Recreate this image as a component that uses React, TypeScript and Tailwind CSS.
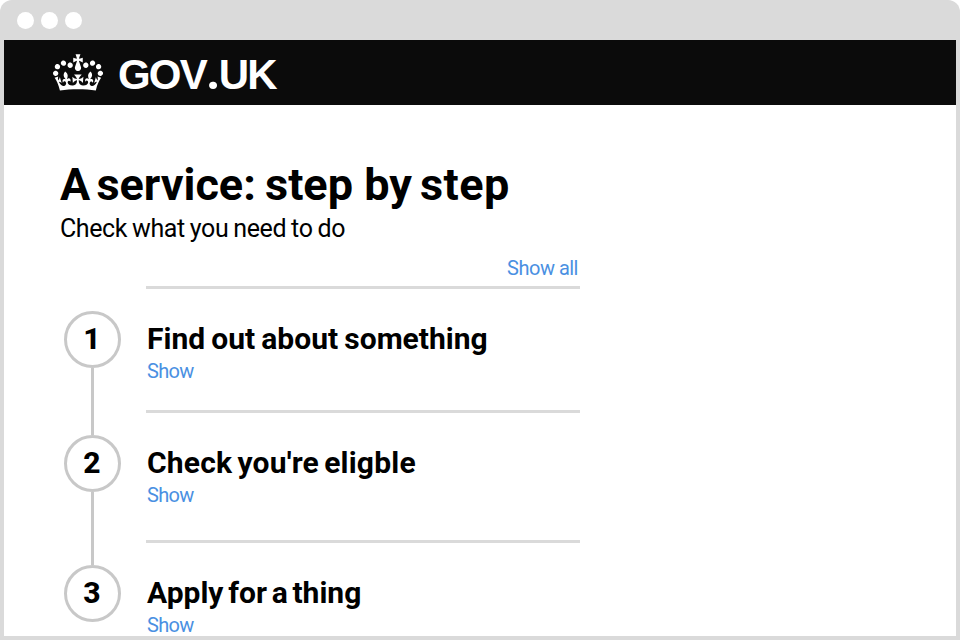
import React from "react";

type Step = { title: string; spacing: string; height: string; last?: boolean };

const steps: Step[] = [
  { title: "Find out about something", spacing: "[word-spacing:-1.3px]", height: "h-[124px]" },
  { title: "Check you're eligble", spacing: "[word-spacing:-2.5px] tracking-[0.2px]", height: "h-[130px]" },
  { title: "Apply for a thing", spacing: "[word-spacing:-2.7px]", height: "h-[93px]", last: true },
];

function Crown() {
  return (
    <svg className="h-[37px] w-[50px] shrink-0" viewBox="0 0 132 97" fill="#fff">
      <path d="M25 30.2c3.5 1.5 7.7-.2 9.1-3.7 1.5-3.6-.2-7.8-3.9-9.2-3.6-1.4-7.6.3-9.1 3.9-1.4 3.5.3 7.5 3.9 9zM9 39.5c3.6 1.5 7.8-.2 9.2-3.7 1.5-3.6-.2-7.8-3.9-9.1-3.6-1.5-7.6.2-9.1 3.8-1.4 3.5.3 7.5 3.8 9zM4.4 57.2c3.5 1.5 7.7-.2 9.1-3.8 1.5-3.6-.2-7.7-3.9-9.1-3.5-1.5-7.6.3-9.1 3.8-1.4 3.5.3 7.6 3.9 9.1zm38.3-21.4c3.5 1.5 7.7-.2 9.1-3.8 1.5-3.6-.2-7.7-3.9-9.1-3.6-1.5-7.6.3-9.1 3.8-1.3 3.6.4 7.7 3.9 9.1zm64.4-5.6c-3.6 1.5-7.8-.2-9.1-3.7-1.5-3.6.2-7.8 3.8-9.2 3.6-1.4 7.7.3 9.2 3.9 1.3 3.5-.4 7.5-3.9 9zm15.9 9.3c-3.6 1.5-7.7-.2-9.1-3.7-1.5-3.6.2-7.8 3.7-9.1 3.6-1.5 7.7.2 9.2 3.8 1.5 3.5-.3 7.5-3.8 9zm4.7 17.7c-3.6 1.5-7.8-.2-9.2-3.8-1.5-3.6.2-7.7 3.9-9.1 3.6-1.5 7.7.3 9.2 3.8 1.3 3.5-.4 7.6-3.9 9.1zM89.3 35.8c-3.6 1.5-7.8-.2-9.2-3.8-1.4-3.6.2-7.7 3.9-9.1 3.6-1.5 7.7.3 9.2 3.8 1.4 3.6-.3 7.7-3.9 9.1zM69.7 17.7l8.9 4.7V9.3l-8.9 2.8c-.2-.3-.5-.6-.9-.9L72.4 0H59.6l3.5 11.2c-.3.3-.6.5-.9.9l-8.8-2.8v13.1l8.8-4.7c.3.3.6.7.9.9l-5 15.4v.1c-.2.8-.4 1.6-.4 2.4 0 4.1 3.1 7.5 7 8.1h.2c.3 0 .7.1 1 .1.4 0 .7 0 1-.1h.2c4-.6 7.1-4.1 7.1-8.1 0-.8-.1-1.7-.4-2.4V34l-5.1-15.4c.4-.2.7-.6 1-.9zM66 92.8c16.9 0 32.800 1.100 47.100 3.200 4-16.900 8.900-26.700 14-33.500l-9.600-3.400c1 4.900 1.100 7.200 0 10.200-1.500-1.400-3-4.300-4.200-8.700L108.600 76c2.800-2 5-3.200 7.500-3.300-4.400 9.400-10 11.900-13.600 11.200-4.300-.8-6.300-4.600-5.600-7.900 1-4.700 5.700-5.900 8-.5 4.300-8.700-3-11.400-7.600-8.800 7.100-7.200 7.900-13.500 2.100-21.100-8 6.100-8.100 12.300-4.500 20.800-4.700-5.400-12.100-2.500-9.500 6.200 3.400-5.200 7.900-2 7.200 3.100-.6 4.300-6.400 7.800-13.500 7.200-10.300-.9-10.900-8-11.200-13.800 2.500-.5 7.100 1.800 11 7.300L80.200 60c-4.100 4.400-8 5.300-12.300 5.400 1.400-4.400 8-11.600 8-11.600H55.500s6.400 7.200 7.900 11.600c-4.200-.1-8-1-12.300-5.400l1.400 16.400c3.900-5.500 8.500-7.700 10.900-7.300-.3 5.800-.9 12.800-11.100 13.800-7.200.6-12.900-2.900-13.500-7.200-.7-5 3.800-8.300 7.100-3.100 2.700-8.700-4.600-11.600-9.400-6.200 3.700-8.500 3.600-14.700-4.600-20.800-5.800 7.600-5 13.900 2.200 21.100-4.700-2.600-11.900.1-7.700 8.800 2.300-5.500 7.100-4.200 8.100.5.7 3.300-1.300 7.100-5.700 7.900-3.500.7-9-1.800-13.500-11.200 2.500.1 4.700 1.300 7.500 3.300l-4.700-15.400c-1.200 4.400-2.700 7.200-4.300 8.700-1.100-3-.9-5.300 0-10.200l-9.500 3.400c5 6.900 9.900 16.700 14 33.500 14.800-2.100 30.800-3.200 47.700-3.200z" />
    </svg>
  );
}

function StepRow({ step, n }: { step: Step; n: number }) {
  return (
    <li className={`flex ${step.height}`}>
      <div className="ml-[59px] flex w-[58px] shrink-0 flex-col items-center">
        <span className="flex size-[57px] shrink-0 items-center justify-center rounded-full border-[3px] border-[#c8c8c8] pb-[2px] text-[30px] font-extrabold leading-none">
          {n}
        </span>
        {!step.last && <span className="w-[3px] grow bg-[#c8c8c8]" />}
      </div>
      <div className="ml-[25px] flex w-[434px] flex-col justify-between">
        <div className="pl-[1px]">
          <h2 className={`mt-[10px] whitespace-nowrap text-[30px] font-bold leading-[36px] ${step.spacing}`}>{step.title}</h2>
          <a className="mt-[2px] block text-[20px] leading-[24px] tracking-[-0.7px] text-[#4a90e2]">Show</a>
        </div>
        {!step.last && <hr className="mb-[22px] h-[3px] border-0 bg-[#dadada]" />}
      </div>
    </li>
  );
}

export default function App() {
  return (
    <div className="h-[640px] w-[960px] overflow-hidden bg-white font-['Roboto',sans-serif] text-black">
      <div className="flex h-full flex-col rounded-t-[12px] bg-[#dadada] px-1 pb-1">
        <div className="flex h-10 shrink-0 items-center gap-[7px] pl-[13px]">
          <span className="size-[17px] rounded-full bg-white" />
          <span className="size-[17px] rounded-full bg-white" />
          <span className="size-[17px] rounded-full bg-white" />
        </div>
        <header className="flex h-[65px] shrink-0 items-center bg-[#0b0b0b] pl-[49px]">
          <Crown />
          <span className="ml-[15px] mt-[4px] whitespace-nowrap font-['Liberation_Sans',sans-serif] text-[42px] font-bold leading-[42px] tracking-[-1.8px] text-white">
            GOV<span className="font-['Roboto',sans-serif] text-[50px] leading-[0]">.</span>UK
          </span>
        </header>
        <main className="min-h-0 grow overflow-hidden bg-white">
          <h1 className="ml-[56px] mt-[54px] whitespace-nowrap text-[45px] font-bold leading-[52px]">
            <span className="[word-spacing:-5px]">A </span>
            <span className="[word-spacing:-2px]">service: </span>step<span> </span>
            <span className="[word-spacing:-3px]">by </span>
            <span className="tracking-[0.4px]">step</span>
          </h1>
          <p className="ml-[56px] mt-[3px] whitespace-nowrap text-[25px] leading-[30px] tracking-[-0.4px] [word-spacing:-0.8px]">
            Check what you need to do
          </p>
          <div className="ml-[142px] mt-[12px] flex h-[33px] w-[434px] flex-col justify-between">
            <a className="pr-[2px] text-right text-[20px] leading-[24px] tracking-[-0.5px] text-[#4a90e2]">Show all</a>
            <hr className="h-[3px] border-0 bg-[#dadada]" />
          </div>
          <ol className="mt-[22px]">
            {steps.map((s, i) => (
              <StepRow key={s.title} step={s} n={i + 1} />
            ))}
          </ol>
        </main>
      </div>
    </div>
  );
}
